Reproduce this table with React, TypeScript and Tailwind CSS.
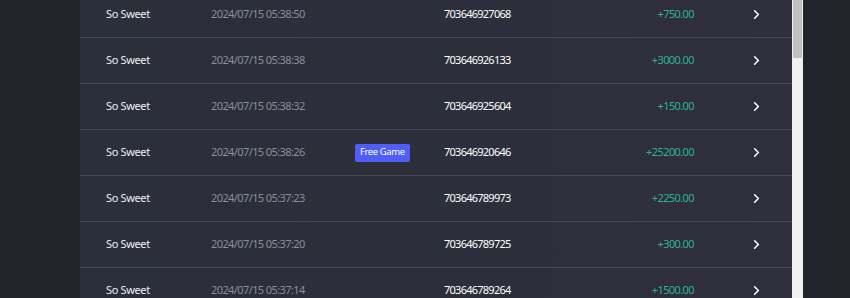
import { ChevronRight } from 'lucide-react'

const ROWS: { game: string; time: string; round: string; win: string; free?: boolean }[] = [
  { game: 'So Sweet', time: '2024/07/15 05:38:50', round: '703646927068', win: '+750.00' },
  { game: 'So Sweet', time: '2024/07/15 05:38:38', round: '703646926133', win: '+3000.00' },
  { game: 'So Sweet', time: '2024/07/15 05:38:32', round: '703646925604', win: '+150.00' },
  { game: 'So Sweet', time: '2024/07/15 05:38:26', round: '703646920646', win: '+25200.00', free: true },
  { game: 'So Sweet', time: '2024/07/15 05:37:23', round: '703646789973', win: '+2250.00' },
  { game: 'So Sweet', time: '2024/07/15 05:37:20', round: '703646789725', win: '+300.00' },
  { game: 'So Sweet', time: '2024/07/15 05:37:14', round: '703646789264', win: '+1500.00' },
]

export default function App() {
  return (
    <div className="h-[298px] w-[850px] overflow-hidden flex bg-[#22252c] font-['Noto_Sans',sans-serif] text-[11px]">
      <div className="w-[80px] shrink-0 bg-[#22252c]" />

      {/* History list */}
      <div className="w-[712px] shrink-0 bg-gradient-to-r from-[#2b2f39] to-[#2f2e3d] overflow-hidden">
        <div className="-mt-[8px]">
          {ROWS.map((r) => (
            <div key={r.round} className="h-[46px] flex items-center border-b border-[#454853]">
              <div className="w-[131px] pl-[26px] text-[#eef0f4] tracking-[-0.35px]">{r.game}</div>
              <div className="w-[144px] text-[#8a8e98] tracking-[-0.6px]">{r.time}</div>
              <div className="w-[89px]">
                {r.free && (
                  <span className="inline-flex items-center h-[18px] px-[5px] rounded-[2px] bg-[#4f5ef6] text-white text-[9.5px] tracking-[-0.4px]">
                    Free Game
                  </span>
                )}
              </div>
              <div className="w-[150px] text-white tracking-[-0.75px]">{r.round}</div>
              <div className="w-[100px] text-right text-[#2bb58c] tracking-[-0.6px]">{r.win}</div>
              <div className="flex-1 flex justify-end pr-[28px] text-white">
                <ChevronRight size={15} strokeWidth={2.5} />
              </div>
            </div>
          ))}
        </div>
      </div>

      {/* Scrollbar */}
      <div className="w-[11px] shrink-0 bg-[#f1f1f1] flex flex-col">
        <div className="h-[58px] mx-[1px] bg-[#c1c1c1]" />
      </div>

      <div className="flex-1 bg-[#22252c]" />
    </div>
  )
}
